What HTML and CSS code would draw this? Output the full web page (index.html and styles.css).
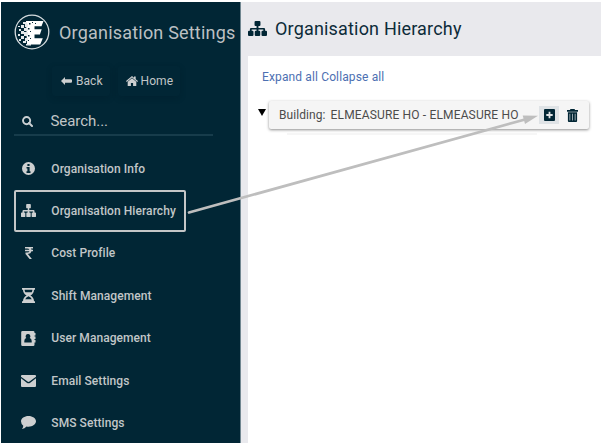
FILE: index.html
```html
<!DOCTYPE html>
<html lang="en">
<head>
<meta charset="utf-8">
<title>Organisation Hierarchy</title>
<link rel="stylesheet" href="styles.css">
</head>
<body>
<svg class="defs" width="0" height="0">
  <symbol id="sitemap" viewBox="0 0 18 15"><path d="M6.200 1q0-1 1-1h3.600q1 0 1 1v3q0 1-1 1H9.900v1.900H15q1.200 0 1.200 1.200v1.700h.8q1 0 1 1V14q0 1-1 1h-3.200q-1 0-1-1v-3.200q0-1 1-1h.7V8.600H9.900v1.200h.7q1 0 1 1V14q0 1-1 1H7.400q-1 0-1-1v-3.200q0-1 1-1h.7V8.600H3.500v1.200h.7q1 0 1 1V14q0 1-1 1H1q-1 0-1-1v-3.200q0-1 1-1h.8V8.100q0-1.200 1.200-1.200h5.100V5h-.9q-1 0-1-1z"/></symbol>
</svg>
<div class="app">
  <aside class="sidebar">
    <header class="brand">
      <svg class="logo" viewBox="0 0 36 36">
        <circle cx="18" cy="18" r="16.800" fill="none" stroke="#d5dbde" stroke-width="1.300"/>
        <path fill="#fff" d="M12 7h17.500l-2 5.200H20.500v3.100h7.200l-1.800 5.200h-5.400v3.700h8.300l-2.600 6.300H13z"/>
        <path fill="#e6eaec" d="M9 8h3v2H9zM11 10h3v3h-3zM7 11h3v3H7zM10 14h4v3h-4zM5 15h2v2H5zM7 17h3v3H7zM10 18h4v4h-4zM4 20h2v2H4zM7 22h3v3H7zM11 24h3v3h-3zM9 27h3v2H9zM5 25h2v2H5zM4 12h2v1H4zM12 30h5v1.500h-5z"/>
        <path fill="#012635" d="M15 9h1.500v1.500H15zM18 8h1v1h-1zM14 14h1.500v1.500H14zM16 17h1v1h-1zM14 21h1.500v1.500H14zM16 24h1v1h-1zM14 26h1v1h-1zM21 9h1v1h-1z"/>
      </svg>
      <h1>Organisation Settings</h1>
    </header>
    <div class="actions">
      <a class="action"><svg width="11" height="8" viewBox="0 0 11 8"><path d="M0 4l4-4v2.200h6q1 0 1 1v1.600q0 1-1 1H4V8z"/></svg>Back</a>
      <a class="action"><svg width="12" height="10" viewBox="0 0 12 10"><path d="M6 0l2 1.700V.600h1.700v2.600L12 5.100l-.7.8L6 1.500.700 5.900 0 5.100zM6 2.200l4.300 3.600V10H7.100V7H4.900v3H1.700V5.800z"/></svg>Home</a>
    </div>
    <div class="search">
      <svg width="11" height="11" viewBox="0 0 11 11"><circle cx="4.600" cy="4.600" r="3.600" fill="none" stroke="#cbd0d3" stroke-width="1.900"/><path d="M7 7l3 3" stroke="#cbd0d3" stroke-width="2" stroke-linecap="round"/></svg>
      <span>Search...</span>
    </div>
    <nav class="menu">
      <a class="item"><span class="icon"><svg width="13" height="13" viewBox="0 0 13 13"><path fill-rule="evenodd" d="M6.500 0a6.500 6.500 0 1 0 0 13 6.500 6.500 0 0 0 0-13zM5.400 2h2.200v2H5.400zM4.500 5h3.100v4.200h.9V11h-4V9.200h.9V6.600h-.9z"/></svg></span>Organisation Info</a>
      <a class="item selected"><span class="icon"><svg width="15" height="13" viewBox="0 0 18 15" preserveAspectRatio="none"><use href="#sitemap" width="18" height="15"/></svg></span>Organisation Hierarchy</a>
      <a class="item"><span class="icon"><svg width="8" height="12" viewBox="0 0 8 12"><path d="M0 0h8v1.500H5.800q.6.600.7 1.300H8v1.500H6.500Q6 6.800 2.900 7l4 5H4.600L.500 7V5.500h1.600q2 0 2.400-1.200H0V2.800h4.400Q4 1.500 2 1.500H0z"/></svg></span>Cost Profile</a>
      <a class="item"><span class="icon"><svg width="13" height="15" viewBox="0 0 13 15"><path fill-rule="evenodd" d="M0 0h13v1.700h-1Q12 5.500 8.400 7.500 12 9.500 12 13.300h1V15H0v-1.700h1Q1 9.500 4.600 7.500 1 5.500 1 1.700H0zM2.600 1.700q0 1.300.7 2.500h6.400q.7-1.200.7-2.500zM6.500 8.300Q4 9.200 3.200 11.300h6.600Q9 9.200 6.500 8.300z"/></svg></span>Shift Management</a>
      <a class="item"><span class="icon"><svg width="15" height="15" viewBox="0 0 15 15"><path fill-rule="evenodd" d="M1.500 0h10.700q1.300 0 1.300 1.300V2h1v2.500h-1v1h1V8h-1v1h1v2.500h-1v2.200q0 1.300-1.300 1.300H1.500Q.200 15 .200 13.700V1.300Q.200 0 1.500 0zM7 3a2.400 2.400 0 0 0-1.700 4.100Q3.300 7.800 3.300 10v1.500h7.400V10q0-2.200-2-2.900A2.400 2.400 0 0 0 7 3z"/></svg></span>User Management</a>
      <a class="item"><span class="icon"><svg width="15" height="12" viewBox="0 0 15 12"><path d="M1 0h13q1 0 1 1v.7L8.500 6.600q-1 .7-2 0L0 1.700V1q0-1 1-1zM0 3.200l5.800 4.500q1.700 1.200 3.400 0L15 3.200V11q0 1-1 1H1q-1 0-1-1z"/></svg></span>Email Settings</a>
      <a class="item"><span class="icon"><svg width="15" height="13" viewBox="0 0 15 13"><path d="M7.500 0C11.600 0 15 2.300 15 5.300s-3.400 5.400-7.500 5.400q-1 0-2-.2Q3.700 12.600.900 13q1.300-1.500 1.400-3.300Q0 8 0 5.300C0 2.300 3.400 0 7.500 0z"/></svg></span>SMS Settings</a>
    </nav>
  </aside>
  <main class="content">
    <header class="title"><svg width="19" height="15" viewBox="0 0 18 15" preserveAspectRatio="none"><use href="#sitemap" width="18" height="15"/></svg><h2>Organisation Hierarchy</h2></header>
    <section class="panel">
      <div class="links"><a>Expand all</a> <a>Collapse all</a></div>
      <div class="node">
        <svg class="caret" width="8" height="7" viewBox="0 0 8 7"><path d="M0 0h8L4 7z"/></svg>
        <div class="card">
          <span class="kind">Building:</span><span class="name">ELMEASURE HO - ELMEASURE HO</span>
          <span class="add"><svg width="11" height="12" viewBox="0 0 11 12"><path fill-rule="evenodd" d="M1 0h9q1 0 1 1v10q0 1-1 1H1q-1 0-1-1V1q0-1 1-1zM4.600 2.700V5H2.300v2h2.300v2.300h1.800V7h2.300V5H6.400V2.700z"/></svg></span>
          <svg class="trash" width="11" height="13" viewBox="0 0 11 13"><path fill-rule="evenodd" d="M3.500 0h4l.6 1H11v1.700H0V1h2.900zM.9 3.200h9.200V12q0 1-1 1H1.900q-1 0-1-1zM2.600 4.700v6.800h.6V4.700zM5.200 4.700v6.800h.6V4.700zM7.800 4.700v6.800h.6V4.700z"/></svg>
        </div>
      </div>
      <div class="next-edge"></div>
    </section>
  </main>
</div>
<svg class="pointer" viewBox="0 0 601 444"><path d="M189 212.500L525 119.500" stroke="#bebebe" stroke-width="2.700" stroke-linecap="round"/><path fill="#bebebe" d="M538 115.800l-13 8.200-2.300-8.500z"/></svg>
</body>
</html>
```
FILE: styles.css
```css
* { box-sizing: border-box; }
body { margin: 0; width: 601px; height: 444px; overflow: hidden; background: #fff; font-family: Roboto, "Liberation Sans", sans-serif; }
svg { display: block; flex: none; }
.defs { position: absolute; }
h1, h2 { margin: 0; font-weight: 400; white-space: nowrap; }
.app { display: flex; height: 444px; padding: 2px 0 1px 1px; }
.sidebar { width: 240px; flex: none; background: #012635; border-right: 1px solid #708690; color: #c2c6c8; fill: #cdcfd0; }
.brand { display: flex; align-items: center; height: 60px; padding-left: 13px; }
.logo { width: 36px; height: 36px; }
.brand h1 { margin-left: 9px; font-size: 18px; letter-spacing: .2px; color: #bcc0c3; }
.actions { display: flex; gap: 8px; height: 32px; margin: 4px 0 0 51px; }
.action { display: flex; align-items: center; height: 30px; padding: 0 7px 0 9px; gap: 4px; font-size: 12px; letter-spacing: .05px; border-radius: 3px; box-shadow: 0 2px 6px rgba(0, 20, 32, .2); }
.action + .action { gap: 3px; padding-left: 8px; }
.search { display: flex; align-items: center; height: 38px; margin: 0 27px 0 13px; padding: 10px 0 0 8px; border-bottom: 2px solid #173c4b; font-size: 15px; }
.search span { margin-left: 17.5px; letter-spacing: -.05px; }
.menu { margin-top: 11.4px; }
.item { display: flex; align-items: center; height: 42.4px; margin: 0 54px 0 13px; font-size: 12px; font-weight: 500; letter-spacing: .07px; white-space: nowrap; }
.icon { display: flex; justify-content: center; width: 29px; margin-right: 8.3px; }
.selected { outline: 2.5px solid #c4c6c7; outline-offset: -2px; border-radius: 2px; }
.content { flex: 1; padding-left: 7px; background: #e9e9ed; }
.title { display: flex; align-items: center; height: 54px; gap: 8px; color: #0d2b39; fill: #012635; }
.title svg { margin-top: -1px; }
.title h2 { margin-top: -2px; font-size: 18px; letter-spacing: .18px; }
.panel { height: 387px; padding-top: 13px; background: #fff; }
.links { padding-left: 14px; height: 30px; line-height: 16px; font-size: 12px; letter-spacing: .13px; color: #4d70b2; }
.node { display: flex; padding-left: 10px; }
.caret { margin-top: 10px; }
.card { display: flex; align-items: center; width: 320px; height: 28px; margin: 2px 0 0 3px; padding: 0 11px 0 10px; background: #f5f5f5; border-radius: 2px; box-shadow: 0 1px 3px rgba(0, 0, 0, .45); font-size: 12px; color: #4c4c4c; fill: #012635; white-space: nowrap; }
.kind { letter-spacing: .08px; }
.name { margin-left: 5px; letter-spacing: .15px; }
.add { display: grid; place-items: center; width: 20px; height: 18px; margin-left: auto; background: #dfe3e6; }
.trash { margin-left: 8px; }
.next-edge { width: 250px; height: 2px; margin: 4px 0 0 39px; background: #f6f6f6; }
.pointer { position: absolute; left: 0; top: 0; width: 601px; height: 444px; pointer-events: none; }
```
